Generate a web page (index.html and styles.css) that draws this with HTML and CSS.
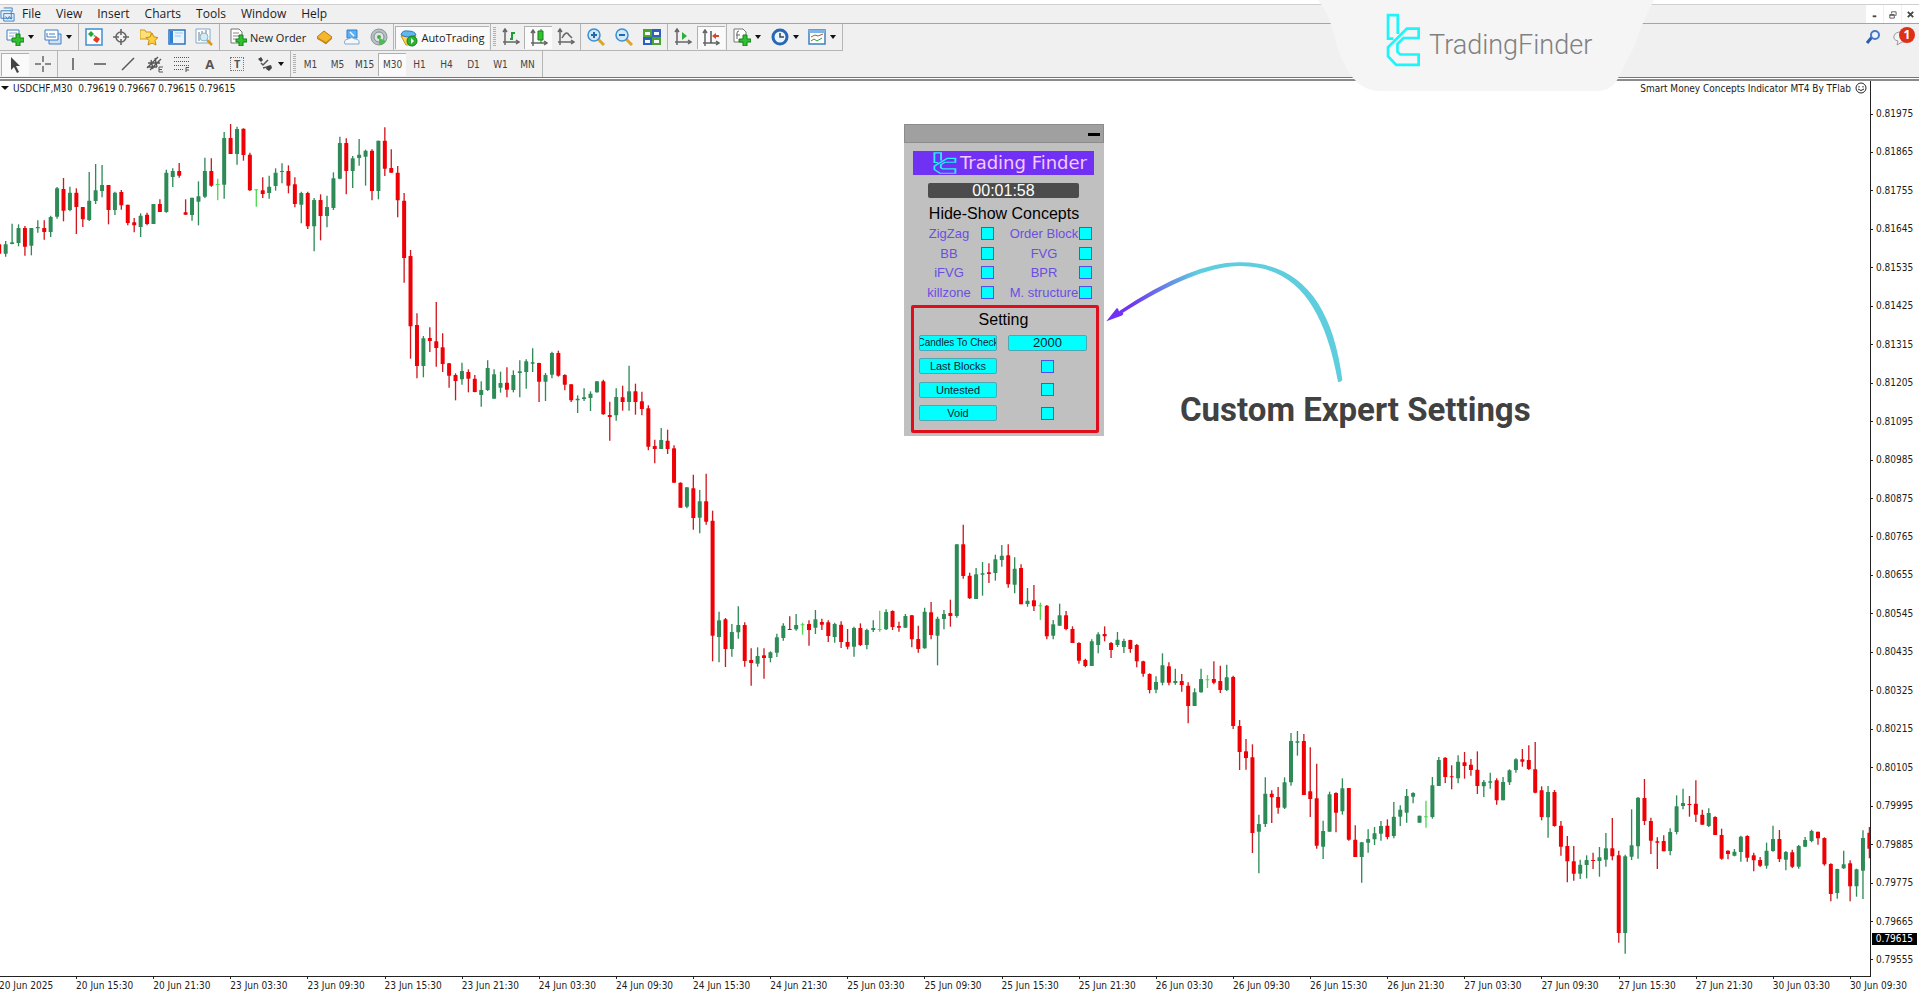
FILE: index.html
```html
<!DOCTYPE html>
<html lang="en">
<head>
    <meta charset="UTF-8">
    <meta name="viewport" content="width=device-width, initial-scale=1.0">
    <title>USDCHF,M30</title>
    <link rel="stylesheet" href="styles.css">
</head>
<body>

<header class="menubar">
    <svg class="app-icon" viewBox="0 0 16 16"><path d="M1 4h11v8H1zM4 1h9v4M4 7h11v8H4z" fill="#e4f0fc" stroke="#3c7fc4"/><path d="M6 10l2 3 2-3 2 3 1-2" fill="none" stroke="#3c7fc4"/></svg>
    <nav class="menu">
        <button type="button">File</button>
        <button type="button">View</button>
        <button type="button">Insert</button>
        <button type="button">Charts</button>
        <button type="button">Tools</button>
        <button type="button">Window</button>
        <button type="button">Help</button>
    </nav>
    <div class="window-buttons">
        <button type="button" aria-label="Minimize"><svg viewBox="0 0 10 10"><path d="M3 7h4" stroke="#444" stroke-width="2"/></svg></button>
        <button type="button" aria-label="Restore"><svg viewBox="0 0 10 10"><path d="M2 5h5v4H2zM4 4V2h5v4H8M2 6h5" fill="none" stroke="#555"/></svg></button>
        <button type="button" aria-label="Close"><svg viewBox="0 0 10 10"><path d="M2 2l6 6M8 2l-6 6" stroke="#444" stroke-width="2"/></svg></button>
    </div>
</header>

<div class="toolbars">
    <div class="toolbar toolbar-main">
        <div class="group group-files">
            <button type="button" class="drop" aria-label="New chart"><svg viewBox="0 0 18 18"><path d="M1 2h12v10H1z" fill="#fff" stroke="#3c7fc4"/><path d="M3 5h8M3 8h5" stroke="#7fb0dc"/><path d="M10 6h4v4h4v4h-4v4h-4v-4H6v-4h4z" fill="#2fc12f" stroke="#14801a"/></svg></button>
            <button type="button" class="drop" aria-label="Profiles"><svg viewBox="0 0 18 18"><path d="M5 6h12v10H5z" fill="#cfe2f5" stroke="#3c7fc4"/><path d="M1 2h13v10H1z" fill="#fff" stroke="#3c7fc4"/><path d="M3 9V5M3 9h9M5 6h6" stroke="#3c7fc4" fill="none"/></svg></button>
        </div>
        <div class="group group-panels">
            <button type="button" aria-label="Market Watch"><svg viewBox="0 0 18 18"><path d="M1 1h16v16H1z" fill="#fff" stroke="#3c8fd0" stroke-width="1.5"/><path d="M3 6l3-3 3 3-3 3zM8 8l2-1 1 2z" fill="#23a53b"/><path d="M11 8l4 3-3 4-4-3z" fill="#e23b22"/></svg></button>
            <button type="button" aria-label="Data Window"><svg viewBox="0 0 18 18"><circle cx="9" cy="9" r="5" fill="none" stroke="#666" stroke-width="1.6"/><path d="M9 1v6M9 11v6M1 9h6M11 9h6" stroke="#666" stroke-width="1.6"/></svg></button>
            <button type="button" aria-label="Favorites"><svg viewBox="0 0 18 18"><path d="M0 2h5l1 2h5v7H0z" fill="#ffe07a" stroke="#c99a1a"/><path d="M12 5l2 4 4 .5-3 3 1 4.500-4-2-4 2 1-4.500-3-3 4-.5z" fill="#ffd23e" stroke="#c58a10"/></svg></button>
            <button type="button" aria-label="Navigator"><svg viewBox="0 0 18 18"><path d="M1 2h16v14H1z" fill="#eaf4ff" stroke="#2c73c0" stroke-width="1.500"/><path d="M2 3h3v12H2z" fill="#2f80d0"/><path d="M7 5h8M7 8h6" stroke="#9cc5ec"/></svg></button>
            <button type="button" aria-label="Strategy Tester"><svg viewBox="0 0 18 18"><path d="M1 1h14v14H1z" fill="#fff" stroke="#7da9d0"/><path d="M4 4v9M7 3v6M11 2v5" stroke="#777"/><path d="M12 12l5 5" stroke="#d69a22" stroke-width="2.500"/><circle cx="9" cy="9" r="4" fill="#d4ebfb" stroke="#8bb"/></svg></button>
        </div>
        <div class="group group-trade">
            <button type="button" class="wide"><svg viewBox="0 0 18 18"><path d="M2 1h8l3 3v11H2z" fill="#fff" stroke="#777"/><path d="M4 5h6M4 8h6M4 11h3" stroke="#888"/><path d="M10 7h4v4h4v3h-4v4h-4v-4H7v-3h3z" fill="#2fc12f" stroke="#14801a"/></svg>New Order</button>
            <button type="button" aria-label="MetaEditor"><svg viewBox="0 0 18 18"><path d="M1 9l7-6 8 6-6 7z" fill="#f4b62d" stroke="#b87a10"/><path d="M1 9l9 5 6-5v2l-6 5-9-5z" fill="#c98a18"/></svg></button>
            <button type="button" aria-label="Virtual Hosting"><svg viewBox="0 0 18 18"><path d="M4 2h10v8H4z" fill="#5db1f2" stroke="#2f80d0"/><path d="M7 4l4 4" stroke="#fff" stroke-width="1.500"/><path d="M2 16q-2-4 3-5 4-3 7 0 5 0 4 5z" fill="#f3f7fb" stroke="#86a8c8"/></svg></button>
            <button type="button" aria-label="Signals"><svg viewBox="0 0 18 18"><circle cx="9" cy="9" r="8" fill="#b9c0c4" stroke="#8d989e"/><circle cx="9" cy="9" r="5" fill="#dfe4e4" stroke="#7f8c90"/><circle cx="9" cy="9" r="2" fill="#3fae49"/><path d="M9 10v7q5 0 7-4" fill="#52b956"/></svg></button>
        </div>
        <div class="group group-auto">
            <button type="button" class="wide pressed"><svg viewBox="0 0 18 18"><path d="M1 7h15l-6 9H6z" fill="#ffd34d" stroke="#c3921d"/><path d="M1 6q1-5 7-4 7 0 8 4-7 4-15 0z" fill="#63b7ee" stroke="#2c7fbd"/><circle cx="12" cy="12" r="5" fill="#2cb135" stroke="#13801c"/><path d="M11 9l3 3-3 3z" fill="#fff"/></svg>AutoTrading</button>
        </div>
        <div class="group group-style grip">
            <button type="button" aria-label="Bar chart"><svg viewBox="0 0 18 18"><use href="#axes"/><path d="M10 12V4M10 11H8M10 5h3" fill="none" stroke="#1f9d3a" stroke-width="2"/></svg></button>
            <button type="button" class="pressed" aria-label="Candlesticks"><svg viewBox="0 0 18 18"><use href="#axes"/><path d="M11 0v14" stroke="#14801a"/><path d="M8 2h5v9H8z" fill="#2fc12f" stroke="#14801a"/></svg></button>
            <button type="button" aria-label="Line chart"><svg viewBox="0 0 18 18"><use href="#axes"/><path d="M5 10q4-8 7-3l3 3" fill="none" stroke="#666" stroke-width="1.500"/></svg></button>
        </div>
        <div class="group group-zoom">
            <button type="button" aria-label="Zoom In"><svg viewBox="0 0 18 18"><path d="M11 11l6 6" stroke="#d9a52a" stroke-width="3"/><circle cx="7" cy="7" r="6" fill="#cfe9fb" stroke="#3d8fd0" stroke-width="1.500"/><path d="M4 7h6M7 4v6" stroke="#2468a8" stroke-width="2"/></svg></button>
            <button type="button" aria-label="Zoom Out"><svg viewBox="0 0 18 18"><path d="M11 11l6 6" stroke="#d9a52a" stroke-width="3"/><circle cx="7" cy="7" r="6" fill="#cfe9fb" stroke="#3d8fd0" stroke-width="1.500"/><path d="M4 7h6" stroke="#2468a8" stroke-width="2"/></svg></button>
            <button type="button" aria-label="Tile Windows"><svg viewBox="0 0 18 18"><path d="M0 1h9v8H0zM9 9h9v8H9z" fill="#4ba52c"/><path d="M9 1h9v8H9zM0 9h9v8H0z" fill="#2d5fc0"/><path d="M2 4h5v3H2zM11 4h5v3h-5zM2 12h5v3H2zM11 12h5v3h-5z" fill="#f4f9ff"/></svg></button>
        </div>
        <div class="group group-scroll">
            <button type="button" aria-label="Auto Scroll"><svg viewBox="0 0 18 18"><use href="#axes"/><path d="M8 4l5 4-5 4z" fill="#2fae3d"/></svg></button>
            <button type="button" class="pressed" aria-label="Chart Shift"><svg viewBox="0 0 18 18"><use href="#axes"/><path d="M9 2v12" stroke="#555" stroke-width="1.500"/><path d="M10 7l4-3v2h3v2h-3v2z" fill="#d8432a"/></svg></button>
        </div>
        <div class="group group-templates">
            <button type="button" class="drop" aria-label="Indicators"><svg viewBox="0 0 18 18"><path d="M1 1h9l3 3v10H1z" fill="#fff" stroke="#777"/><path d="M4 11V5q0-2 2-2M3 7h4" fill="none" stroke="#666"/><path d="M10 7h4v4h4v3h-4v4h-4v-4H6v-3h4z" fill="#2fc12f" stroke="#14801a"/></svg></button>
            <button type="button" class="drop" aria-label="Periods"><svg viewBox="0 0 18 18"><circle cx="9" cy="9" r="7" fill="#e8f4ff" stroke="#2767b4" stroke-width="3"/><path d="M9 5v4h4" fill="none" stroke="#444" stroke-width="1.500"/></svg></button>
            <button type="button" class="drop" aria-label="Templates"><svg viewBox="0 0 18 18"><path d="M1 2h16v14H1z" fill="#fff" stroke="#3c7fc4" stroke-width="1.500"/><path d="M1 2h16v3H1z" fill="#7fb4e6"/><path d="M3 9l4-2 3 1 5-2" fill="none" stroke="#b5562c"/><path d="M3 13l3-2 3 2 5-3" fill="none" stroke="#2c9b42"/></svg></button>
        </div>
        <div class="alerts">
            <button type="button" aria-label="Search"><svg viewBox="0 0 18 18"><path d="M8 9l-5 6" stroke="#2c5cae" stroke-width="3"/><circle cx="11" cy="7" r="4" fill="#eef5ff" stroke="#4a78c4" stroke-width="2"/></svg></button>
            <button type="button" class="bubble" aria-label="Messages"><svg viewBox="0 0 18 18"><path d="M9 4q7 0 7 5t-6 5l-5 3 1-4q-5-1-4-5 1-4 7-4z" fill="#f4f4f4" stroke="#9a9a9a"/></svg><span class="badge">1</span></button>
        </div>
    </div>

    <div class="toolbar toolbar-lines">
        <div class="group group-cursor">
            <button type="button" class="pressed" aria-label="Cursor"><svg viewBox="0 0 18 18"><path d="M4 1l9 9H9l3 6-2 1-3-6-3 3z" fill="#444"/></svg></button>
            <button type="button" aria-label="Crosshair"><svg viewBox="0 0 18 18"><path d="M9 1v6M9 11v6M1 9h6M11 9h6" stroke="#666" stroke-width="1.500"/></svg></button>
        </div>
        <div class="group group-draw">
            <button type="button" aria-label="Vertical line"><svg viewBox="0 0 18 18"><path d="M9 3v12" stroke="#555" stroke-width="1.500"/></svg></button>
            <button type="button" aria-label="Horizontal line"><svg viewBox="0 0 18 18"><path d="M3 9h12" stroke="#555" stroke-width="1.500"/></svg></button>
            <button type="button" aria-label="Trendline"><svg viewBox="0 0 18 18"><path d="M3 15L15 3" stroke="#555" stroke-width="1.500"/></svg></button>
            <button type="button" aria-label="Channel"><svg viewBox="0 0 18 18"><path d="M1 13L12 2M4 15L15 4M2 8h12M1 12h10M5 5l2 9M9 3l2 9" stroke="#555" stroke-width="1.300"/><path d="M17 12h-4v5h4M13 14.500h3" fill="none" stroke="#555"/></svg></button>
            <button type="button" aria-label="Fibonacci"><svg viewBox="0 0 18 18"><path d="M1 2.500h15M1 6.500h15M1 10.500h15M1 14.500h10" stroke="#555" stroke-dasharray="1 1"/><path d="M16 12.500h-3V17M13 15h3" fill="none" stroke="#555"/></svg></button>
            <button type="button" class="letter">A</button>
            <button type="button" class="letter"><span class="letter-box">T</span></button>
            <button type="button" class="drop" aria-label="Arrows"><svg viewBox="0 0 18 18"><path d="M2 4l3-2 2 3-2 2zM11 11l4-1 1 3-3 3-3-2z" fill="#444"/><path d="M5 8l2 2 5-5M7 13l4-1" fill="none" stroke="#555" stroke-width="1.500"/></svg></button>
        </div>
        <div class="group group-periods grip">
            <button type="button">M1</button>
            <button type="button">M5</button>
            <button type="button">M15</button>
            <button type="button" class="pressed">M30</button>
            <button type="button">H1</button>
            <button type="button">H4</button>
            <button type="button">D1</button>
            <button type="button">W1</button>
            <button type="button">MN</button>
        </div>
    </div>
</div>

<main class="chart">
    <div class="plot">
        <svg class="candles" id="candles" viewBox="0 243 5610 2685" preserveAspectRatio="none"></svg>

        <div class="plot-title">
            <span class="triangle"></span>
            <span class="symbol">USDCHF,M30&nbsp; 0.79619 0.79667 0.79615 0.79615</span>
            <span>Smart Money Concepts Indicator MT4 By TFlab</span>
            <svg class="smiley" viewBox="0 0 12 12"><circle cx="6" cy="6" r="5" fill="none" stroke="#222"/><path d="M4 4v1.500M8 4v1.500M3 7q3 3 6 0" fill="none" stroke="#222"/></svg>
        </div>

        <section class="panel">
            <div class="panel-head"><button type="button" aria-label="Collapse"></button></div>
            <div class="panel-banner">
                <svg viewBox="228 40 104 160" preserveAspectRatio="none"><use href="#mark"/></svg>
                <span>Trading Finder</span>
            </div>
            <div class="panel-timer">00:01:58</div>
            <h2>Hide-Show Concepts</h2>
            <div class="concepts">
                <label for="zigzag">ZigZag</label><input type="checkbox" id="zigzag">
                <label for="orderBlock">Order Block</label><input type="checkbox" id="orderBlock">
                <label for="bb">BB</label><input type="checkbox" id="bb">
                <label for="fvg">FVG</label><input type="checkbox" id="fvg">
                <label for="ifvg">iFVG</label><input type="checkbox" id="ifvg">
                <label for="bpr">BPR</label><input type="checkbox" id="bpr">
                <label for="killzone">killzone</label><input type="checkbox" id="killzone">
                <label for="structure">M. structure</label><input type="checkbox" id="structure">
            </div>
            <div class="settings">
                <h2>Setting</h2>
                <div class="settings-grid">
                    <label for="candlesToCheck" class="long">Candles To Check</label><input type="text" id="candlesToCheck" value="2000">
                    <label for="lastBlocks">Last Blocks</label><input type="checkbox" id="lastBlocks">
                    <label for="untested">Untested</label><input type="checkbox" id="untested">
                    <label for="void">Void</label><input type="checkbox" id="void">
                </div>
            </div>
        </section>

        <svg class="arrow" viewBox="40 50 720 380">
            <defs>
                <linearGradient id="arrowFill" gradientUnits="userSpaceOnUse" x1="120" y1="0" x2="320" y2="0">
                    <stop offset="0" stop-color="#6f35ef"/>
                    <stop offset="1" stop-color="#5ecddd"/>
                </linearGradient>
            </defs>
            <path fill="url(#arrowFill)" d="M86 212Q310 62 450 66C620 66 725 180 755 418Q750 428 742 424C700 190 610 78 450 77Q320 76 92 220Z"/>
            <path fill="#7131f5" d="M47 243L78 204Q83 203 84 211L98 219Q98 224 92 226Z"/>
        </svg>
        <p class="callout">Custom Expert Settings</p>
    </div>

    <div class="price-axis" id="priceAxis"></div>
    <div class="price-now">0.79615</div>
    <div class="time-axis" id="timeAxis"></div>
</main>

<div class="brand">
    <svg class="brand-shape" viewBox="0 0 336 91" preserveAspectRatio="none"><path d="M0 0H336Q324 22 317 45L301 76Q295 91 278 91H62Q46 91 35 78Q22 62 16 34Q10 12 0 0Z" fill="#f5f5f5"/></svg>
    <svg class="brand-mark" viewBox="228 40 104 160"><use href="#mark"/></svg>
    <span class="brand-name">TradingFinder</span>
</div>

<svg class="defs" aria-hidden="true">
    <defs>
        <g id="axes"><path d="M3 2v15M1 14h15M1 4l2-3 2 3M14 12l3 2-3 2" fill="none" stroke="#666" stroke-width="1.500"/></g>
        <g id="mark" fill="none" stroke="#1ff4fb" stroke-width="8"><path d="M250 116H234V46H263V102"/><path d="M325 86V114H280L262 132V155L270 163H325V194H258L234 168V142L290 86Z"/></g>
    </defs>
</svg>

<script>
    // every bar: colour (r / g / l = doji), high, body top, body bottom, low
    const runs = [
        { top: 330, bars: 'r393 403 431 490,g393 403 431 440,g341 397 402 403,g343 354 399 409,r348 354 410 437,g354 354 407 436,g331 351 355 368,r331 354 366 389,g317 321 366 381,g231 235 320 326,r204 237 302 334,g230 248 300 304,r235 248 291 372,r291 291 328 351,g186 272 330 333,g162 241 273 282,g165 225 243 262,r225 225 300 343,g245 248 300 315,r240 246 286 299,r284 284 339 346,r324 337 346 367,g310 317 351 381,r308 314 342 346,g282 282 342 342,r268 282 306 306,g179 188 306 308,g175 183 201 231,r159 183 197 203,r268 307 314 314,g263 263 315 332,g214 259 275 346,g143 183 260 264,r145 183 227 230,l206 222 224 271,g66 84 224 266,r42 84 132 132,g50 57 132 164,r55 56 135 152,r128 134 241 243,l238 238 240 290,r202 241 252 264,g197 230 249 266,g175 188 228 242,g160 183 186 220,r166 183 227 250,r202 223 282 292,g245 249 284 340,r245 249 349 357,g264 270 349 424,r253 270 318 391,g257 291 318 352,g187 205 294 300,g80 99 206 208,r85 99 183 253,g138 145 183 234,g87 134 144 167,g119 122 140 227,r118 122 243 271,g92 92 243 268,r52 92 176 198,r118 174 188 188,r168 188 271 322,r249 272 444 518,r420 438 649 746,r610 645 768 805' },
        { top: 900, bars: 'g108 115 198 232,r82 114 123 156,r6 124 144 200,r100 142 192 216,r189 190 227 263,r220 225 243 301,g188 213 238 254,r208 216 236 277,r225 236 276 277,g244 270 285 320,g181 204 270 273,g208 223 296 296,g215 249 263 278,r202 248 269 292,g211 225 270 277,g181 214 219 292,g178 184 216 266,g145 187 191 216,r188 189 245 306,g219 225 245 303,g155 159 224 235,r152 159 227 230,r223 225 254 271,r253 253 301 306,g286 296 301 339,g265 292 297 303,g274 281 294 333,g244 244 277 278,r239 244 343 344,r305 345 351 422,g265 291 346 362,r257 292 306 332,g197 274 306 332,r251 274 306 344,r275 304 327 346,r316 325 440 451,r419 438 447 490,g384 420 447 447,r389 422 447 462,r436 445 548 548,r547 548 623 623,g562 562 620 625,r524 565 654 689,g570 604 653 700,r521 604 665 674,r632 662 1007 1084,g935 961 1011 1087,r954 958 1047 1101,g972 996 1047 1070,g919 975 997 1016,r967 975 1083 1100,r1045 1080 1089 1157,g1042 1068 1091 1100,r1045 1066 1074 1136,g1054 1057 1074 1087,g1001 1012 1058 1071,g970 977 1014 1022,r949 987 990 990,g942 975 988 992' },
        { top: 1500, bars: 'l368 373 375 404,r361 372 390 437,g330 358 383 402,r356 366 374 390,r361 367 408 426,g368 372 411 428,r364 374 426 444,r387 426 440 448,g380 384 440 470,r370 384 435 438,g386 390 435 448,g361 384 390 396,l332 387 389 395,g328 336 388 390,r331 333 381 390,r365 378 383 395,g342 348 383 384,r345 346 418 442,r377 417 447 458,g323 335 445 446,r306 337 405 418,g350 356 407 496,g330 342 357 388,r299 339 348 380,g133 133 348 353,r74 133 228 236,r218 227 295 297,g204 223 297 297,g186 220 224 287,r190 217 222 249,g164 178 219 242,g135 167 180 200,r133 166 253 263,g172 206 254 280,r193 204 313 313,g264 302 312 320,r255 301 319 333,l308 316 318 360,r315 317 409 418,g360 373 407 418,g311 346 377 377,r333 346 387 391,r379 387 429 429,r427 429 482 491,r476 480 498 502,g418 424 498 498,g397 403 435 460,r379 402 409 424,r426 429 450 474,g396 419 435 441,g416 423 441 459,r419 420 447 458,r432 435 484 502,r482 484 521 530,r520 522 570 580,g529 546 569 580,g460 496 548 556,r487 499 548 556,g506 543 549 554,r522 543 555 575,r547 557 618 670,g565 577 618 618' },
        { top: 1860, bars: 'g146 177 217 218,l165 178 180 204,r124 177 188 193,r137 183 210 219,g134 172 210 213,r167 171 318 327,r300 318 396 450,r357 394 414 449,r373 412 639 699,g584 612 635 760,g472 521 612 621,r511 521 532 609,r501 531 563 581,g472 487 563 567,g339 363 487 497,g333 364 368 407,r342 363 525 525,r382 514 537 591,r431 535 677 686,g602 633 680 717,g515 523 635 635,r517 519 578 637,g475 505 574 584,r504 504 659 662,r616 659 711 711,g666 667 711 788,g628 657 668 698,g621 640 658 675,g603 618 641 662,r598 617 651 658,g546 590 648 655,g556 569 590 618,g507 528 578 608,g517 519 530 550,g587 587 608 608,l542 589 591 623,g471 496 591 596,g411 420 498 498,r412 413 471 489,r436 469 472 508,g406 425 475 490,r396 427 438 476,r417 434 450 467,r394 449 498 522,g480 486 499 531,g458 484 488 506,r475 481 541 554,g471 486 541 541,g448 451 487 495,g415 418 450 458,r387 418 425 440,r376 420 447 450,r366 448 518 520,r499 511 591 601,g498 516 592 653,r510 516 618 620' },
        { top: 2160, bars: 'r303 317 380 407,r348 378 424 487,r378 424 461 482,g419 434 461 477,g406 420 435 475,r398 420 423 447,g381 412 423 470,g339 385 419 440,r294 385 409 421,r392 406 639 668,g404 409 639 701,g268 376 410 420,g231 233 379 416,r177 234 303 315,r293 303 362 402,r352 364 368 447,r346 363 394 394,g325 336 393 406,g226 259 336 343,g206 249 258 268,r228 252 255 290,r181 251 284 306,r269 284 314 314,g265 279 318 321,r289 291 345 345,r326 345 416 419,r391 392 402 418,g387 395 407 409,g347 350 396 425,r346 348 413 425,r398 406 421 454,r411 420 437 441,g368 392 437 446,g317 357 393 395,r330 357 417 426,g393 396 419 451,r389 397 440 444,g375 378 440 446,g351 360 380 381,g329 333 363 367,r335 335 355 374,r352 354 433 437,r430 432 522 544,g446 447 519 536,g392 433 445 447,r421 430 499 544,g446 448 499 530,g331 354 452 537,r321 338 386 415' }
    ];
    const barStep = 19.28;
    const names = { r: 'down', g: 'up', l: 'doji' };

    function drawCandles() {
        let x = 17 - barStep;
        let html = '';
        runs.forEach(run => {
            run.bars.split(',').forEach(bar => {
                const [high, open, close, low] = bar.slice(1).split(' ').map(v => Number(v) + run.top);
                const height = Math.max(close - open, 3);
                html += `<g class="${names[bar[0]]}"><path d="M${x.toFixed(1)} ${high}V${low}"/>` +
                    `<rect x="${(x - 6).toFixed(1)}" y="${open}" width="12" height="${height}" rx="1"/></g>`;
                x += barStep;
            });
        });
        document.getElementById('candles').innerHTML = html;
    }

    function drawAxes() {
        let prices = '';
        for (let p = 81975; p >= 79555; p -= 110) {
            prices += `<span>0.${p}</span>`;
        }
        document.getElementById('priceAxis').innerHTML = prices;

        const times = ['20 Jun 2025', '20 Jun 15:30', '20 Jun 21:30'];
        [23, 24, 25, 26, 27].forEach(day => {
            ['03:30', '09:30', '15:30', '21:30'].forEach(t => times.push(`${day} Jun ${t}`));
        });
        times.push('30 Jun 03:30', '30 Jun 09:30');
        document.getElementById('timeAxis').innerHTML = times.map(t => `<span>${t}</span>`).join('');
    }

    drawCandles();
    drawAxes();
</script>

</body>
</html>
```

FILE: styles.css
```css
* {
    box-sizing: border-box;
}

body {
    margin: 0;
    padding-top: 4px;
    height: 100vh;
    display: flex;
    flex-direction: column;
    overflow: hidden;
    background: #fff;
    font-family: "Open Sans", "Noto Sans", sans-serif;
    font-size: 12px;
    color: #1c1c1c;
}

button {
    border: 0;
    padding: 0;
    background: none;
    font: inherit;
    color: inherit;
}

.defs {
    position: absolute;
    width: 0;
    height: 0;
}

/* menu */
.menubar {
    display: flex;
    align-items: center;
    height: 20px;
    background: #f0f0f0;
    border-top: 1px solid #cfcfcf;
    border-bottom: 1px solid #a5a5a5;
}

.app-icon {
    width: 15px;
    height: 15px;
}

.menu {
    display: flex;
    flex: 1;
}

.menu button {
    padding: 0 8px 0 7px;
    line-height: 18px;
}

.window-buttons {
    display: flex;
    gap: 1px;
    height: 100%;
}

.window-buttons button {
    width: 17px;
    background: #fff;
}

.window-buttons svg {
    width: 9px;
    height: 9px;
}

/* toolbars */
.toolbars {
    background: #f0f0f0;
    border-bottom: 1px solid #777;
}

.toolbar {
    display: flex;
    height: 27px;
}

.toolbar-lines {
    height: 26px;
}

.group {
    display: flex;
    align-items: center;
    border-right: 1px solid #b5b5b5;
    border-bottom: 1px solid #b5b5b5;
    padding: 1px;
}

.toolbar-lines .group {
    border-bottom: 0;
}

.group button {
    flex: 1;
    display: flex;
    align-items: center;
    justify-content: center;
    height: 23px;
}

.group svg,
.alerts svg {
    width: 18px;
    height: 18px;
}

.group .wide {
    flex: 0 0 auto;
    gap: 3px;
    font-size: 11px;
}

.group .pressed {
    background: #fafafa;
    border-top: 1px solid #b0b0b0;
    border-left: 1px solid #b0b0b0;
}

.drop::after {
    content: "";
    margin-left: 4px;
    border: 3px solid transparent;
    border-top: 4px solid #111;
    border-bottom: 0;
}

.grip::before {
    content: "";
    width: 3px;
    height: 20px;
    margin: 0 1px;
    background: repeating-linear-gradient(#b0b0b0 0 1px, #f0f0f0 1px 2px);
}

.group-files {
    width: 79px;
}

.group-panels {
    width: 141px;
}

.group-trade {
    width: 174px;
}

.group-trade .wide {
    padding: 0 5px 0 8px;
}

.group-auto {
    width: 97px;
}

.group-auto .wide {
    flex: 1;
}

.group-style {
    width: 90px;
}

.group-zoom {
    width: 87px;
}

.group-scroll {
    width: 59px;
}

.group-templates {
    width: 116px;
}

.alerts {
    display: flex;
    gap: 10px;
    margin-left: auto;
    padding: 4px 9px 0 0;
}

.alerts button {
    height: 18px;
}

.bubble {
    position: relative;
}

.badge {
    position: absolute;
    top: -1px;
    right: -5px;
    width: 16px;
    height: 16px;
    border-radius: 50%;
    background: #dd3018;
    color: #fff;
    font-size: 12px;
    font-weight: bold;
    line-height: 16px;
}

.group-cursor {
    width: 58px;
}

.group-draw {
    width: 233px;
}

.group-draw .drop {
    flex: 0 0 38px;
}

.group-periods {
    width: 252px;
    color: #444;
    font-family: "DejaVu Sans Condensed", "DejaVu Sans", sans-serif;
    font-size: 10px;
}

.letter {
    color: #555;
    font-size: 13px;
    font-weight: bold;
}

.letter-box {
    width: 14px;
    border: 1px dotted #777;
    font-size: 11px;
    line-height: 12px;
}

/* chart */
.chart {
    flex: 1;
    display: grid;
    grid-template-columns: 1fr 48px;
    grid-template-rows: 1fr 19px;
    position: relative;
    margin-top: 1px;
    border-top: 2px solid #8a8a8a;
    font-family: "DejaVu Sans Condensed", "DejaVu Sans", sans-serif;
    font-size: 10px;
}

.plot {
    position: relative;
    min-height: 0;
    border-right: 1px solid #222;
    border-bottom: 1px solid #222;
}

.candles {
    position: absolute;
    inset: 0;
    width: 100%;
    height: 100%;
}

.candles path {
    stroke-width: 4;
}

.up {
    fill: #2e8b57;
    stroke: #2e8b57;
}

.down {
    fill: #ee0004;
    stroke: #d01820;
}

.doji {
    fill: #4ed84e;
    stroke: #4ed84e;
}

.candles rect {
    stroke: none;
}

.plot-title {
    position: relative;
    display: flex;
    align-items: center;
    height: 14px;
    padding: 0 3px 0 1px;
}

.symbol {
    flex: 1;
}

.triangle {
    margin-right: 4px;
    border: 4px solid transparent;
    border-top-color: #111;
    border-bottom: 0;
}

.smiley {
    width: 12px;
    height: 12px;
    margin-left: 4px;
}

.price-axis {
    display: flex;
    flex-direction: column;
    justify-content: space-between;
    padding: 26px 0 10px;
    line-height: 14px;
}

.price-axis span::before {
    content: "";
    display: inline-block;
    width: 2px;
    height: 1px;
    margin-right: 3px;
    background: #222;
    vertical-align: middle;
}

.price-now {
    position: absolute;
    right: 2px;
    bottom: 51px;
    padding: 0 4px 0 4px;
    background: #000;
    color: #fff;
    line-height: 12px;
}

.time-axis {
    grid-column: 1 / -1;
    display: grid;
    grid-template-columns: repeat(25, 1fr);
    margin: 0 -8px 0 -1px;
    line-height: 16px;
    white-space: nowrap;
}

.time-axis span::before {
    content: "";
    display: block;
    width: 1px;
    height: 2px;
    margin-bottom: -1px;
    background: #222;
}

/* expert panel */
.panel {
    position: absolute;
    left: 904px;
    top: 43px;
    width: 200px;
    padding-bottom: 3px;
    background: #c0c0c0;
    font-family: "Liberation Sans", Arial, sans-serif;
    font-size: 13px;
    color: #6a4fe0;
}

.panel h2 {
    margin: 0;
    color: #000;
    font-size: 16px;
    font-weight: normal;
    line-height: 20px;
    text-align: center;
}

.panel-head {
    display: flex;
    justify-content: flex-end;
    height: 19px;
    padding: 8px 3px 0;
    background: #a0a0a0;
    border: 1px solid #8c8c8c;
}

.panel-head button {
    width: 12px;
    height: 3px;
    background: #000;
}

.panel-banner {
    display: flex;
    align-items: center;
    justify-content: flex-end;
    gap: 3px;
    height: 24px;
    margin: 8px 10px 8px 9px;
    padding-right: 7px;
    background: #7131f5;
    color: #f6c9ff;
    font-family: "DejaVu Sans", sans-serif;
    font-size: 18px;
    line-height: 24px;
    white-space: nowrap;
}

.panel-banner svg {
    width: 24px;
    height: 22px;
}

.panel-timer {
    margin: 0 25px 6px 24px;
    border-radius: 2px;
    background: #4c4c4c;
    color: #fff;
    font-size: 16px;
    line-height: 15px;
    text-align: center;
}

.concepts {
    display: grid;
    grid-template-columns: 62px 13px 85px 13px;
    grid-auto-rows: 1fr;
    align-items: center;
    height: 78px;
    margin: 0 0 3px 15px;
    text-align: center;
    white-space: nowrap;
}

.concepts label {
    padding-right: 2px;
}

.concepts label:nth-of-type(even) {
    padding: 0 0 0 15px;
}

input[type="checkbox"] {
    appearance: none;
    width: 13px;
    height: 13px;
    margin: 0;
    border: 1px solid #4f4ff0;
    background: #0ff;
}

.settings {
    margin: 0 5px 0 7px;
    padding: 2px 8px 5px 5px;
    border: 3px solid #e00d1d;
    border-radius: 2px;
}

.settings-grid {
    display: grid;
    grid-template-columns: 78px 79px;
    grid-auto-rows: 1fr;
    column-gap: 11px;
    align-items: center;
    justify-items: center;
    height: 94px;
    margin-top: 1px;
}

.settings label,
.settings input[type="text"] {
    display: flex;
    justify-content: center;
    width: 100%;
    height: 16px;
    overflow: hidden;
    border: 1px solid #4aa9b4;
    border-radius: 2px;
    background: #0ff;
    color: #123;
    font-size: 11px;
    line-height: 14px;
    white-space: nowrap;
}

.settings .long {
    font-size: 10px;
}

.settings input[type="text"] {
    padding: 0;
    font-family: inherit;
    font-size: 13px;
    text-align: center;
}

.arrow {
    position: absolute;
    left: 1104px;
    top: 176px;
    width: 240px;
}

.callout {
    position: absolute;
    left: 1180px;
    top: 311px;
    margin: 0;
    color: #414141;
    font-family: Roboto, sans-serif;
    font-size: 33px;
    font-weight: bold;
    line-height: 36px;
}

/* brand tab */
.brand {
    position: absolute;
    top: 0;
    left: 1318px;
    display: flex;
    align-items: flex-start;
    gap: 8px;
    width: 336px;
    height: 91px;
    padding: 13px 0 0 68px;
}

.brand-shape {
    position: absolute;
    inset: 0;
    width: 100%;
    height: 100%;
}

.brand-mark {
    position: relative;
    width: 35px;
    height: 54px;
}

.brand-name {
    position: relative;
    padding-top: 16px;
    color: #808080;
    font-family: Roboto, sans-serif;
    font-size: 27px;
    font-weight: 300;
    line-height: 32px;
}
```
